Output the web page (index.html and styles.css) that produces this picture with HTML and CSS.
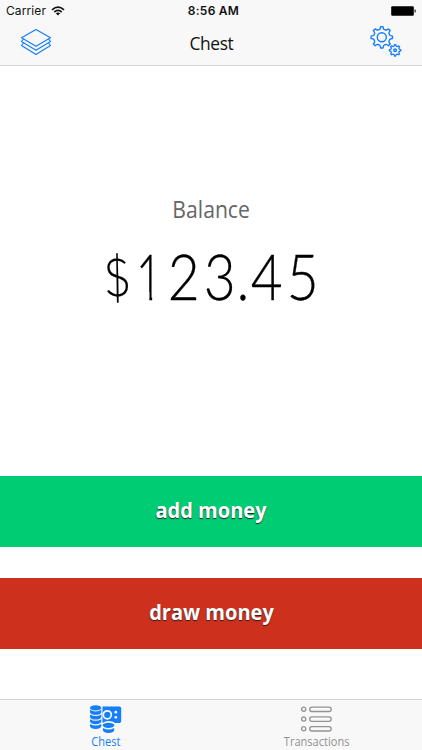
FILE: index.html
```html
<!DOCTYPE html>
<html lang="en">
<head>
<meta charset="utf-8">
<title>Chest</title>
<link rel="stylesheet" href="styles.css">
</head>
<body>
<div class="app">
  <header class="top">
    <div class="status">
      <div class="carrier"><span>Carrier</span>
        <svg width="14" height="10" viewBox="0 0 14 10"><g fill="none" stroke="#111" stroke-width="1.7"><path d="M1 3.800Q7-1.400 13 3.800"/><path d="M3.300 6Q7 2.800 10.700 6"/></g><path d="M4.800 7.300Q7 5.700 9.200 7.300L7 9.500Z" fill="#111"/></svg>
      </div>
      <span class="time">8:56 AM</span>
      <svg class="battery" width="26" height="10" viewBox="0 0 26 10"><rect x=".2" y=".2" width="22.600" height="9.500" rx="1.200"/><path d="M23.600 3.200h.6q1.200 1.700 0 3.500h-.6z"/></svg>
    </div>
    <nav class="navbar">
      <svg class="layers" width="32" height="28" viewBox="0 0 32 28" fill="none" stroke="#157efb" stroke-width="1.200" stroke-linejoin="round"><path d="M16 1.500L30.500 9.800L16 18.300L1.500 9.800Z"/><path d="M3.500 11L1.500 13.500L16 22.300L30.500 13.500L28.500 11"/><path d="M3.500 15L1.500 17.500L16 26.500L30.500 17.500L28.500 15"/></svg>
      <h1 class="title">Chest</h1>
      <svg class="gears" width="34" height="34" viewBox="0 0 34 34" fill="none" stroke="#157efb" stroke-width="1.400" stroke-linejoin="round">
        <defs>
          <path id="gear" d="M7.900-2.200Q8.500-1.400 10.700-1.200V1.200Q8.500 1.400 7.900 2.200L7.100 4Q7.100 5 8.400 6.700L6.700 8.400Q5 7.100 4 7.100L2.200 7.900Q1.400 8.500 1.200 10.700H-1.200Q-1.400 8.500-2.200 7.900L-4 7.100Q-5 7.100-6.700 8.400L-8.400 6.700Q-7.100 5-7.100 4L-7.900 2.200Q-8.500 1.400-10.700 1.200V-1.200Q-8.500-1.400-7.900-2.200L-7.100-4Q-7.100-5-8.400-6.700L-6.700-8.400Q-5-7.100-4-7.100L-2.200-7.900Q-1.400-8.500-1.200-10.700H1.200Q1.400-8.500 2.200-7.900L4-7.100Q5-7.100 6.700-8.400L8.400-6.700Q7.100-5 7.100-4Z"/>
        </defs>
        <use href="#gear" transform="translate(11.800 12.300)"/><circle cx="11.800" cy="12.300" r="4.500"/>
        <use href="#gear" transform="translate(25.100 25.300) scale(.53)" stroke-width="2.500"/><circle cx="25.100" cy="25.300" r="1.300" stroke-width="1.500"/>
      </svg>
    </nav>
  </header>
  <main class="content">
    <section class="balance">
      <h2 class="label">Balance</h2>
      <div class="amount"><span class="dollar">$</span><span class="one">1</span><span>2</span><span>3</span><span class="dot">.</span><span>4</span><span>5</span></div>
    </section>
    <button class="action add"><span>add money</span></button>
    <button class="action draw"><span>draw money</span></button>
  </main>
  <footer class="tabs">
    <div class="tab active">
      <svg width="32" height="29" viewBox="0 0 32 29" fill="#147efb"><path d="M12.500 1.500H29.500Q31.200 1.500 31.200 3.200V16Q31.200 18 29.500 18H25Q23 16 18.500 16Q15 16 12.500 18Z"/><circle cx="17.300" cy="9.800" r="4" stroke="#f8f8f8" stroke-width="1.700"/><g fill="#f8f8f8"><circle cx="25.800" cy="7.200" r="1.400"/><circle cx="25.800" cy="12.300" r="1.400"/></g><defs><path id="coin" d="M0 0Q5.650 3.200 11.300 0V2.400Q10.500 5 5.650 5T0 2.400Z"/></defs><ellipse cx="5.650" cy="2.900" rx="5.650" ry="2.600"/><use href="#coin" y="4.800"/><use href="#coin" y="9.500"/><use href="#coin" y="14.200"/><use href="#coin" y="18.900"/><ellipse cx="18.500" cy="20.300" rx="5.700" ry="2.600"/><use href="#coin" x="12.900" y="22.900"/></svg>
      <span class="chest-name">Chest</span>
    </div>
    <div class="tab">
      <svg width="32" height="29" viewBox="0 0 32 29" fill="none" stroke="#929292" stroke-width="1.300"><circle cx="2.700" cy="4.300" r="2.100"/><rect x="8.700" y="2.100" width="21.500" height="4.400" rx="2.200"/><circle cx="2.700" cy="14.100" r="2.100"/><rect x="8.700" y="11.900" width="21.500" height="4.400" rx="2.200"/><circle cx="2.700" cy="23.800" r="2.100"/><rect x="8.700" y="21.600" width="21.500" height="4.400" rx="2.200"/></svg>
      <span class="transactions-name">Transactions</span>
    </div>
  </footer>
</div>
</body>
</html>
```
FILE: styles.css
```css
* { box-sizing: border-box; }
body { margin: 0; background: #fff; font-family: "Open Sans", sans-serif; }
svg { display: block; }
.app { width: 422px; height: 750px; display: flex; flex-direction: column; overflow: hidden; }
.top { height: 66px; background: #f8f8f8; border-bottom: 1px solid #d2d2d2; }
.status { height: 21px; display: grid; grid-template-columns: 1fr auto 1fr; align-items: center; padding: 0 5px 0 6px; font: 12px Inter, sans-serif; color: #111; }
.carrier { display: flex; align-items: center; gap: 5px; letter-spacing: .1px; }
.time { font-weight: 600; letter-spacing: .25px; padding-left: 4px; }
.battery { justify-self: end; }
.navbar { height: 43px; display: grid; grid-template-columns: 1fr auto 1fr; align-items: start; padding: 0 19px 0 19px; }
.layers { margin: 7px 0 0 1px; }
.title { margin: 9px 0 0; font-size: 18.5px; line-height: 26px; font-weight: 400; letter-spacing: -.4px; color: #111; transform: scaleX(.94); }
.gears { justify-self: end; margin: 4px -1px 0 0; }
.content { flex: 1; display: flex; flex-direction: column; }
.balance { height: 410px; padding-top: 125px; display: flex; flex-direction: column; align-items: center; }
.label { margin: 0; font-size: 23px; line-height: 36px; font-weight: 400; color: #666; transform: scaleX(.92); }
.amount { display: flex; margin-top: 9px; font: 300 64px/80px Lato, sans-serif; color: #000; -webkit-text-stroke: .3px #000; }
.amount span { width: 35.500px; display: flex; justify-content: center; transform: scaleX(.86); }
.amount .dollar { width: 30px; transform: scale(.74, .82) skewX(4deg); }
.amount .one { width: 34px; transform: scaleX(.7); clip-path: polygon(0 0, 100% 0, 100% 56px, 21.500px 56px, 21.500px 100%, 17.500px 100%, 17.500px 56px, 0 56px); }
.amount .dot { width: 12px; }
.action { width: 100%; height: 71px; border: 0; padding: 0 0 5px; color: #fff; font: 700 22px "Open Sans", sans-serif; text-shadow: 0 1px 1px #222; }
.action span { display: inline-block; transform: scaleX(.91); }
.add { background: #00cc74; }
.draw { margin-top: 31px; background: #cd301d; }
.tabs { height: 51px; display: grid; grid-template-columns: 1fr 1fr; background: #f8f8f8; border-top: 1px solid #d2d2d2; }
.tab { display: flex; flex-direction: column; align-items: center; padding-top: 5px; font-size: 12px; line-height: 15px; color: #929292; }
.tab span { transform: scaleX(.92); }
.active { color: #147efb; }
```
